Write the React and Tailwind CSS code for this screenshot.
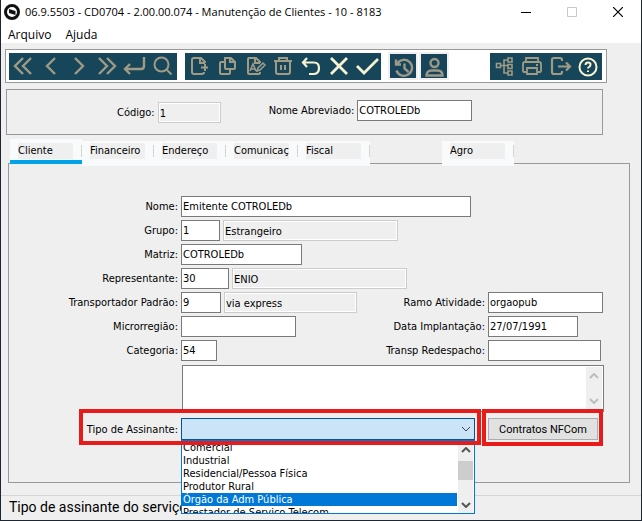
import { useState } from 'react'

const TABS = ['Cliente', 'Financeiro', 'Endereço', 'Comunicação', 'Fiscal', '', 'Agro']

const TIPOS = [
  'Comercial',
  'Industrial',
  'Residencial/Pessoa Física',
  'Produtor Rural',
  'Órgão da Adm Pública',
  'Prestador de Serviço Telecom',
]

const ICONS = {
  first: <path d="M14 5L6 13l8 8M22 5l-8 8 8 8" strokeWidth="2.400" />,
  prev: <path d="M18 5l-8 8 8 8" strokeWidth="2.400" />,
  next: <path d="M10 5l8 8-8 8" strokeWidth="2.400" />,
  last: <path d="M6 5l8 8-8 8M14 5l8 8-8 8" strokeWidth="2.400" />,
  enter: <path d="M23 4v9q0 3-3 3H4M9 11l-5 5 5 5" strokeWidth="2.400" />,
  search: <><circle cx="12.5" cy="11.5" r="7" /><path d="M17.5 16.5l5 5" /></>,
  add: <path d="M20 10v-1l-4-4H9q-2 0-2 2v12q0 2 2 2h8q2 0 2-2M15 5v5h5M20 11v7M16 14.5h7" />,
  copy: <path d="M12 5h6l4 4v6q0 1-1 1h-8q-1 0-1-1zM17 5v4h5M12 9H8q-1 0-1 1v10q0 1 1 1h8q1 0 1-1v-4" />,
  edit: <><path d="M19 10V9l-4-4H8q-1 0-1 1v14q0 1 1 1h10q1 0 1-2M14 5v5h5" /><path d="M9 18l3-7 3 7M10 16h4M16 18l1-3 5-5 2 2-5 5z" strokeWidth="1.500" /></>,
  trash: <path d="M5 8h18M10 8V5h8v3M7 8v11q0 2 2 2h10q2 0 2-2V8M12 12v5M16 12v5" />,
  undo: <path d="M10 5L6 9.500l4 4.500M6 9.500h11q5 0 5 5.500t-5 6h-5" strokeWidth="2.200" />,
  cancel: <path d="M6 5l16 16M22 5L6 21" strokeWidth="2.800" />,
  ok: <path d="M4 13l7 7L25 6" strokeWidth="2.800" />,
  tree: <path d="M6.500 10.500h4v4h-4zM18 5h4v4h-4zM18 11.500h4v4h-4zM18 18h4v4h-4zM10.500 12.500H18M18 7h-4v13h4" strokeWidth="1.600" />,
  print: <path d="M8 9V5h12v4M8 19H6q-1 0-1-1v-7q0-2 2-2h14q2 0 2 2v7q0 1-1 1h-2M9 15h10v6H9zM18 12h2" strokeWidth="1.800" />,
  exit: <path d="M16 8V7q0-2-2-2H8Q6 5 6 7v12q0 2 2 2h6q2 0 2-2v-1M12 13.500h12M20 9.500l4 4-4 4" strokeWidth="2.200" />,
  help: <><circle cx="14" cy="14" r="8.500" /><path d="M11.500 12q0-2.500 2.500-2.500t2.500 2.300q0 1.200-1.500 2.200-1 .6-1 1.500M14 17.500v1.500" /></>,
}

const GRUPO_NAV = [
  ['first', 'Primeiro'], ['prev', 'Anterior'], ['next', 'Próximo'],
  ['last', 'Último'], ['enter', 'Vá para'], ['search', 'Pesquisar'],
]
const GRUPO_EDICAO = [
  ['add', 'Incluir'], ['copy', 'Copiar'], ['edit', 'Alterar'], ['trash', 'Eliminar'],
  ['undo', 'Desfazer', true], ['cancel', 'Cancelar', true], ['ok', 'Salvar', true],
]
const GRUPO_SISTEMA = [
  ['tree', 'Consultas'], ['print', 'Relatórios'], ['exit', 'Sair'], ['help', 'Ajuda', true],
]

function ToolGroup({ items }) {
  return (
    <div className="flex bg-[#17465a]">
      {items.map(([icon, label, ativo]) => (
        <button key={icon} type="button" aria-label={label}
          className={`h-[27px] w-7 ${ativo ? 'text-[#f6f3d3]' : 'text-[#9f9b84]'}`}>
          <svg viewBox="0 0 28 27" className="h-[27px] w-7" fill="none" stroke="currentColor" strokeWidth="2">
            {ICONS[icon]}
          </svg>
        </button>
      ))}
    </div>
  )
}

function Campo({ id, label, className, value, labelClass = 'w-[169px]', children }) {
  return (
    <div className="flex items-center gap-[3px]">
      <label htmlFor={id} className={`shrink-0 text-right whitespace-nowrap ${labelClass}`}>{label}</label>
      <input id={id} defaultValue={value}
        className={`h-[21px] border border-[#7a7a7a] bg-white px-px outline-none ${className}`} />
      {children}
    </div>
  )
}

function Descricao({ value, label, id, className }) {
  return (
    <input id={id} readOnly value={value} aria-label={label}
      className={`h-[21px] border border-[#cccccc] bg-[#efefef] px-px pt-px inset-ring inset-ring-white outline-none ${className}`} />
  )
}

function Seta({ up, className }) {
  return (
    <svg viewBox="0 0 10 6" className={`h-[6px] w-[10px] ${className}`} fill="none" stroke="currentColor">
      <path d={up ? 'M1 5l4-4 4 4' : 'M1 1l4 4 4-4'} />
    </svg>
  )
}

export default function App() {
  const [tab, setTab] = useState('Cliente')
  const [tipo, setTipo] = useState('Órgão da Adm Pública')

  return (
    <div className="flex min-h-screen flex-col border-x border-b border-[#1c2733] bg-[#efefef] font-['DejaVu_Sans_Condensed','DejaVu_Sans',sans-serif] text-[11px] leading-[13px] text-black">
      <header className="bg-white font-['Open_Sans',sans-serif] leading-4">
        <div className="flex h-6 items-center pl-[3px]">
          <svg viewBox="0 0 16 16" className="h-4 w-4">
            <circle cx="8" cy="8" r="6.500" fill="#fff" stroke="#111" strokeWidth="3" />
            <path d="M5 5l6.500 2v4L5 9z" fill="#111" />
          </svg>
          <h1 className="ml-[5px] flex-1 text-[11px] whitespace-nowrap">06.9.5503 - CD0704 - 2.00.00.074 - Manutenção de Clientes - 10 - 8183</h1>
          <div className="flex">
            <button type="button" aria-label="Minimizar" className="flex h-6 w-[46px] items-center justify-center">
              <svg viewBox="0 0 10 10" className="h-[10px] w-[10px]" stroke="#000"><path d="M0 5.500h10" /></svg>
            </button>
            <button type="button" aria-label="Maximizar" disabled className="flex h-6 w-[46px] items-center justify-center">
              <svg viewBox="0 0 10 10" className="h-[10px] w-[10px]" fill="none" stroke="#c8c8c8"><path d="M.5.5h9v9h-9z" /></svg>
            </button>
            <button type="button" aria-label="Fechar" className="flex h-6 w-[46px] items-center justify-center">
              <svg viewBox="0 0 10 10" className="h-[10px] w-[10px]" stroke="#000" strokeWidth="1.200"><path d="M0 0l10 10M10 0L0 10" /></svg>
            </button>
          </div>
        </div>
        <nav className="flex h-[19px] items-center gap-[14px] pt-[3px] pl-[7px] text-[12px]">
          <button type="button">Arquivo</button>
          <button type="button">Ajuda</button>
        </nav>
      </header>

      <div className="mt-[6px] mr-[34px] ml-1 flex items-center border border-[#999999] bg-white py-[2px] pr-1 pl-[3px]">
        <ToolGroup items={GRUPO_NAV} />
        <div className="ml-2"><ToolGroup items={GRUPO_EDICAO} /></div>
        <div className="ml-[7px] flex gap-px">
          <button type="button" aria-label="Histórico" className="border-2 border-[#efefef] bg-[#17445a] text-[#9b9986]">
            <svg viewBox="0 0 26 24" className="h-6 w-[26px]" fill="none" stroke="currentColor" strokeWidth="2.400">
              <path d="M7.300 9.500A8 8 0 1 1 6.500 16.500M6 5.500v5h5M14.500 9.500v5l4 3.500" />
            </svg>
          </button>
          <button type="button" aria-label="Usuário" className="border-2 border-[#efefef] bg-[#17445a] text-[#9b9986]">
            <svg viewBox="0 0 26 24" className="h-6 w-[26px]" fill="none" stroke="currentColor" strokeWidth="2.400">
              <circle cx="13.500" cy="9" r="4" />
              <path d="M5.500 21.500q0-5 5-5h6q5 0 5 5z" />
            </svg>
          </button>
        </div>
        <div className="ml-auto"><ToolGroup items={GRUPO_SISTEMA} /></div>
      </div>

      <div className="mt-[6px] mr-[38px] ml-[5px] flex h-[46px] items-start border border-[#999999]">
        <div className="mt-3 ml-[110px] flex items-center gap-[3px]">
          <label htmlFor="codigo">Código:</label>
          <Descricao id="codigo" value="1" className="w-[63px]" />
        </div>
        <div className="mt-[10px] ml-12">
          <Campo id="abreviado" label="Nome Abreviado:" labelClass="w-auto" value="COTROLEDb" className="w-[115px]" />
        </div>
      </div>

      <div role="tablist" className="relative z-10 mt-1 -mb-[3px] ml-[9px] flex items-start">
        {TABS.map((t, i) => t === '' ? <div key={i} className="w-[72px]" /> : (
          <button key={t} type="button" role="tab" aria-selected={tab === t} onClick={() => setTab(t)}
            className={tab === t
              ? 'flex h-[25px] w-[72px] flex-col border-b-4 border-[#00a2e8] bg-[#f8fafc] pt-1'
              : 'mt-[2px] flex h-[25px] w-[72px] flex-col bg-[#f8fafc] pt-[2px]'}>
            <span className="flex w-full items-center">
              <span className="ml-2 block h-4 w-[55px] overflow-hidden bg-[#efefef] text-left leading-4 whitespace-nowrap">{t}</span>
              <span className="ml-auto h-3 w-px bg-[#d5d5d5]" />
            </span>
          </button>
        ))}
      </div>

      <main className="mr-[11px] ml-[7px] h-80 border border-[#999999] pt-8 pr-[25px]">
        <div className="flex flex-col gap-[3px]">
          <Campo id="nome" label="Nome:" value="Emitente COTROLEDb" className="w-[290px]" />
          <Campo id="grupo" label="Grupo:" value="1" className="w-[39px]">
            <Descricao label="Descrição do grupo" value="Estrangeiro" className="w-[175px]" />
          </Campo>
          <Campo id="matriz" label="Matriz:" value="COTROLEDb" className="w-[121px]" />
          <Campo id="repres" label="Representante:" value="30" className="w-12">
            <Descricao label="Nome do representante" value="ENIO" className="w-[175px]" />
          </Campo>
          <div className="flex justify-between">
            <Campo id="transp" label="Transportador Padrão:" value="9" className="w-10">
              <Descricao label="Nome do transportador" value="via express" className="w-[133px]" />
            </Campo>
            <div className="w-[219px]">
              <Campo id="ramo" label="Ramo Atividade:" labelClass="w-[100px]" value="orgaopub" className="w-[115px]" />
            </div>
          </div>
          <div className="flex justify-between">
            <Campo id="micro" label="Microrregião:" value="" className="w-[115px]" />
            <div className="w-[219px]">
              <Campo id="data" label="Data Implantação:" labelClass="w-[100px]" value="27/07/1991" className="w-[90px]" />
            </div>
          </div>
          <div className="flex justify-between">
            <Campo id="categoria" label="Categoria:" value="54" className="w-9" />
            <div className="w-[219px]">
              <Campo id="redespacho" label="Transp Redespacho:" labelClass="w-[100px]" value="" className="w-[113px]" />
            </div>
          </div>
        </div>

        <div className="mt-1 ml-[173px] flex h-[47px] border border-[#7a7a7a] bg-white p-px">
          <textarea aria-label="Observações" className="min-w-0 flex-1 resize-none outline-none" />
          <div className="flex w-4 flex-col items-center justify-between bg-[#efefef] py-[6px] text-[#bdbdbd]">
            <Seta up className="stroke-2" />
            <Seta className="stroke-2" />
          </div>
        </div>

        <div className="mt-[6px] flex">
          <div className="relative flex items-center gap-[3px]">
            <label htmlFor="tipo" className="w-[169px] text-right">Tipo de Assinante:</label>
            <div className="relative">
              <select id="tipo" className="block h-[22px] w-[294px] appearance-none border border-[#005499] bg-[#cce4f7] outline-none" />
              <Seta className="pointer-events-none absolute top-2 right-1 text-[#444]" />
              <div className="absolute top-full left-0 flex h-[74px] w-full border border-[#0078d7] bg-white">
                <ul role="listbox" aria-label="Tipos de assinante" className="mr-px flex-1 overflow-hidden">
                  {TIPOS.map(t => (
                    <li key={t} role="option" aria-selected={t === tipo} onClick={() => setTipo(t)}
                      className={`h-[13px] px-px whitespace-nowrap ${t === tipo ? 'bg-[#0078d7] text-white' : ''}`}>{t}</li>
                  ))}
                </ul>
                <div className="mr-px flex w-[15px] flex-col items-center bg-[#efefef] pt-[6px] pb-[5px] text-[#555]">
                  <Seta up className="stroke-2" />
                  <div className="mt-2 h-[19px] w-full bg-[#cdcdcd]" />
                  <Seta className="mt-auto stroke-2" />
                </div>
              </div>
            </div>
            <span className="pointer-events-none absolute -top-[9px] -right-[6px] -bottom-[5px] left-[70px] z-20 border-4 border-[#e81b1b]" />
          </div>
          <div className="relative ml-[13px]">
            <button type="button"
              className="h-[22px] w-[110px] border border-[#adadad] bg-[#e1e1e1] font-[Roboto,sans-serif] text-[11px]">
              Contratos NFCom
            </button>
            <span className="pointer-events-none absolute -top-[9px] -right-[5px] -bottom-[6px] -left-[6px] z-20 border-4 border-[#e81b1b]" />
          </div>
        </div>
      </main>

      <footer className="mt-3 flex-1 border-t border-[#d5d5d5] pt-[3px] pl-2 font-[Roboto,sans-serif] text-[14px] leading-4">
        Tipo de assinante do serviço
      </footer>
    </div>
  )
}
